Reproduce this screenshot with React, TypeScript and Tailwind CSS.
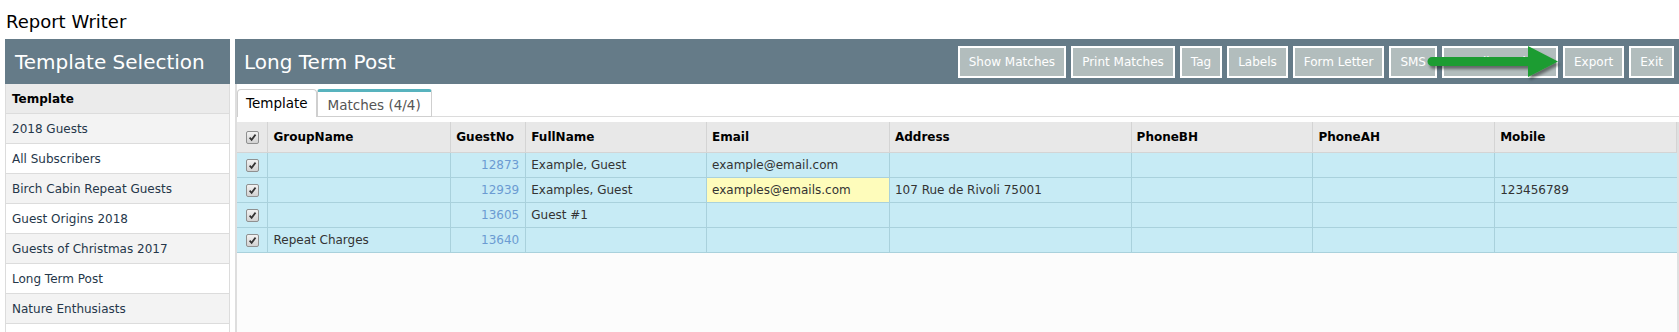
import React from 'react';

const templates = [
  '2018 Guests',
  'All Subscribers',
  'Birch Cabin Repeat Guests',
  'Guest Origins 2018',
  'Guests of Christmas 2017',
  'Long Term Post',
  'Nature Enthusiasts',
  '',
];

const actions = ['Show Matches', 'Print Matches', 'Tag', 'Labels', 'Form Letter', 'SMS', 'Email Matches', 'Export', 'Exit'];

const columns = [
  { label: 'GroupName', w: 'w-[183px]' },
  { label: 'GuestNo', w: 'w-[75px]' },
  { label: 'FullName', w: 'w-[181px]' },
  { label: 'Email', w: 'w-[183px]' },
  { label: 'Address', w: 'w-[242px]' },
  { label: 'PhoneBH', w: 'w-[182px]' },
  { label: 'PhoneAH', w: 'w-[182px]' },
  { label: 'Mobile', w: 'w-[182px]' },
];

const matches = [
  { group: '', no: '12873', name: 'Example, Guest', email: 'example@email.com', flag: false, addr: '', mobile: '' },
  { group: '', no: '12939', name: 'Examples, Guest', email: 'examples@emails.com', flag: true, addr: '107 Rue de Rivoli 75001', mobile: '123456789' },
  { group: '', no: '13605', name: 'Guest #1', email: '', flag: false, addr: '', mobile: '' },
  { group: 'Repeat Charges', no: '13640', name: '', email: '', flag: false, addr: '', mobile: '' },
];

function Check() {
  return (
    <span className="inline-flex h-[13px] w-[13px] items-center justify-center rounded-[2px] border border-[#8f9090] bg-linear-to-b from-[#f2f2f2] to-[#d2d2d2] align-middle">
      <svg viewBox="0 0 10 10" className="h-[9px] w-[9px]">
        <path d="M1.8 5.2 L4 7.6 L8.4 1.8" fill="none" stroke="#333" strokeWidth="1.9" />
      </svg>
    </span>
  );
}

function Arrow() {
  return (
    <svg className="absolute left-[1185px] top-[3px] h-[42px] w-[150px]" viewBox="0 0 150 42">
      <defs>
        <filter id="sh" x="-10%" y="-20%" width="130%" height="160%">
          <feDropShadow dx="2" dy="3" stdDeviation="1.6" floodColor="#000" floodOpacity="0.45" />
        </filter>
      </defs>
      <path
        d="M12 15 H108 V4 L138 19.5 L108 35 V24 H12 A4.5 4.5 0 0 1 12 15 Z"
        fill="#1e9c31"
        filter="url(#sh)"
      />
    </svg>
  );
}

export default function App() {
  return (
    <div className="flex h-screen flex-col overflow-hidden bg-white font-['DejaVu_Sans',sans-serif] text-[12px]">
      <div className="h-[39px] shrink-0 pl-[6px] pt-[11px] text-[18px] leading-[22px] text-black">Report Writer</div>

      <div className="flex min-h-0 flex-1 gap-[5px] pl-[5px]">
        {/* Template list */}
        <div className="flex w-[225px] shrink-0 flex-col">
          <div className="flex h-[45px] shrink-0 items-center bg-[#657b88] pl-[10px] text-[20px] text-white">
            Template Selection
          </div>
          <div className="shrink-0 border-x border-[#dcdcdc]">
            <div className="flex h-[30px] items-center border-b border-[#dcdcdc] bg-[#ebebeb] pl-[6px] font-bold text-black">
              Template
            </div>
            {templates.map((t, i) => (
              <div
                key={i}
                className={`flex h-[30px] items-center border-b border-[#dcdcdc] pl-[6px] text-[#25374a] ${
                  i % 2 === 0 ? 'bg-[#f3f3f3]' : 'bg-white'
                }`}
              >
                {t}
              </div>
            ))}
          </div>
        </div>

        {/* Main panel */}
        <div className="flex min-w-0 flex-1 flex-col">
          <div className="relative flex h-[45px] shrink-0 items-center justify-between bg-[#657b88] pl-[9px] pr-[5px]">
            <span className="text-[20px] text-white">Long Term Post</span>
            <div className="flex gap-[5px]">
              {actions.map((a) => (
                <button
                  key={a}
                  className={`h-[32px] border-2 border-white bg-[#b2bdbd] px-[9px] text-[12px] text-white ${
                    a === 'Email Matches' ? 'w-[116px]' : ''
                  }`}
                >
                  {a}
                </button>
              ))}
            </div>
            <Arrow />
          </div>

          <div className="flex min-h-0 flex-1 flex-col border-l-2 border-[#dedede]">
            <div className="flex h-[33px] shrink-0 items-end border-b border-[#dcdcdc]">
              <div className="-mb-px flex h-[28px] items-center rounded-t-[4px] border border-b-0 border-[#cfcfcf] bg-white px-[8px] text-[13.5px] text-black">
                Template
              </div>
              <div className="-mb-px flex h-[28px] items-center rounded-t-[3px] border border-t-[3px] border-[#cfcfcf] border-t-[#58b3be] bg-white px-[10px] pt-[2px] text-[13.5px] text-[#555]">
                Matches (4/4)
              </div>
            </div>

            <div className="mt-[5px] flex-1 border-r-2 border-[#e0e0e0] bg-[#fcfcfc]">
              <table className="table-fixed border-collapse text-[12px]">
                <thead>
                  <tr className="h-[30px] bg-[#e8e8e8] text-left">
                    <th className="w-[31px] border-r border-b border-[#d4d4d4] text-center font-normal">
                      <Check />
                    </th>
                    {columns.map((c) => (
                      <th key={c.label} className={`${c.w} border-r border-b border-[#d4d4d4] px-[5px] font-bold text-black`}>
                        {c.label}
                      </th>
                    ))}
                  </tr>
                </thead>
                <tbody>
                  {matches.map((m) => (
                    <tr key={m.no} className="h-[25px] bg-[#c7ebf5] text-[#333]">
                      <td className="border-r border-b border-[#a9d1dc] text-center">
                        <Check />
                      </td>
                      <td className="border-r border-b border-[#a9d1dc] px-[5px]">{m.group}</td>
                      <td className="border-r border-b border-[#a9d1dc] px-[6px] text-right text-[#6b9bd2]">{m.no}</td>
                      <td className="border-r border-b border-[#a9d1dc] px-[5px]">{m.name}</td>
                      <td className={`border-r border-b border-[#a9d1dc] px-[5px] ${m.flag ? 'bg-[#fefcbb]' : ''}`}>{m.email}</td>
                      <td className="border-r border-b border-[#a9d1dc] px-[5px]">{m.addr}</td>
                      <td className="border-r border-b border-[#a9d1dc] px-[5px]"></td>
                      <td className="border-r border-b border-[#a9d1dc] px-[5px]"></td>
                      <td className="border-b border-[#a9d1dc] px-[5px]">{m.mobile}</td>
                    </tr>
                  ))}
                </tbody>
              </table>
            </div>
          </div>
        </div>
      </div>
    </div>
  );
}
